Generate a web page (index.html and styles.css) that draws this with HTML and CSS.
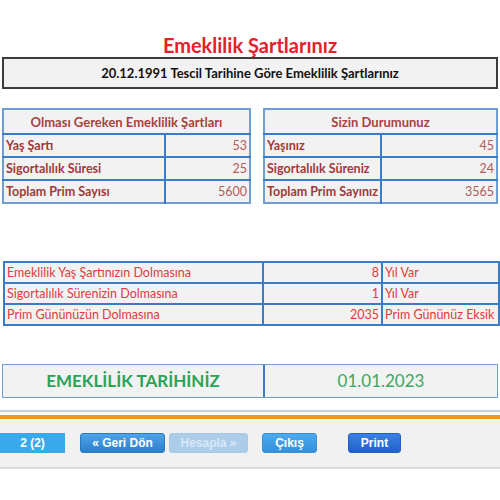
FILE: index.html
```html
<!DOCTYPE html>
<html lang="tr">
<head>
<meta charset="utf-8">
<link rel="stylesheet" href="styles.css">
</head>
<body>
<div class="page">
  <h1 class="title">Emeklilik Şartlarınız</h1>
  <div class="subtitle">20.12.1991 Tescil Tarihine Göre Emeklilik Şartlarınız</div>

  <div class="tables">
    <table class="info left">
      <tr><th colspan="2">Olması Gereken Emeklilik Şartları</th></tr>
      <tr><td class="lbl">Yaş Şartı</td><td class="val">53</td></tr>
      <tr><td class="lbl">Sigortalılık Süresi</td><td class="val">25</td></tr>
      <tr><td class="lbl">Toplam Prim Sayısı</td><td class="val">5600</td></tr>
    </table>
    <table class="info right">
      <tr><th colspan="2">Sizin Durumunuz</th></tr>
      <tr><td class="lbl">Yaşınız</td><td class="val">45</td></tr>
      <tr><td class="lbl">Sigortalılık Süreniz</td><td class="val">24</td></tr>
      <tr><td class="lbl">Toplam Prim Sayınız</td><td class="val">3565</td></tr>
    </table>
  </div>

  <table class="remain">
    <tr><td class="c1">Emeklilik Yaş Şartınızın Dolmasına</td><td class="c2">8</td><td class="c3">Yıl Var</td></tr>
    <tr><td class="c1">Sigortalılık Sürenizin Dolmasına</td><td class="c2">1</td><td class="c3">Yıl Var</td></tr>
    <tr><td class="c1">Prim Gününüzün Dolmasına</td><td class="c2">2035</td><td class="c3">Prim Gününüz Eksik</td></tr>
  </table>

  <div class="datebox">
    <div class="dlabel">EMEKLİLİK TARİHİNİZ</div>
    <div class="dvalue">01.01.2023</div>
  </div>

  <div class="sep-gray"></div>
  <div class="sep-orange"></div>
  <div class="toolbar">
    <span class="pager">2 (2)</span>
    <span class="btn back">« Geri Dön</span>
    <span class="btn disabled">Hesapla »</span>
    <span class="btn exit">Çıkış</span>
    <span class="btn print">Print</span>
  </div>
</div>
</body>
</html>
```

FILE: styles.css
```css
html, body {
  margin: 0;
  padding: 0;
  background: #ffffff;
}
.page {
  width: 500px;
  height: 500px;
  overflow: hidden;
  font-family: Lato, "Open Sans", sans-serif;
}
.title {
  margin: 0;
  padding-top: 33px;
  height: 24px;
  line-height: 24px;
  font-size: 20px;
  font-weight: bold;
  color: #e4202c;
  text-align: center;
}
.subtitle {
  margin: 0 2px 0 2px;
  height: 28px;
  line-height: 28px;
  border: 2px solid #3c3c3c;
  background: #f2f2f2;
  font-size: 13px;
  font-weight: bold;
  color: #111;
  text-align: center;
}
.tables {
  display: flex;
  justify-content: space-between;
  padding: 19px 2px 0 2px;
}
table {
  border-collapse: collapse;
}
.info {
  border: 2px solid #6f9fd0;
  background: #f2f2f2;
}
.info.left { width: 249px; }
.info.right { width: 235px; }
.info th {
  height: 23px;
  font-size: 13px;
  font-weight: bold;
  color: #a8413f;
  text-align: center;
  border-bottom: 2px solid #3a7cc6;
  padding: 0;
}
.info td {
  height: 21px;
  padding: 0 2px;
  font-size: 12.5px;
  border-top: 2px solid #3a7cc6;
}
.info td.lbl {
  font-weight: bold;
  color: #a0393a;
  border-right: 2px solid #3a7cc6;
}
.info.left td.lbl { width: 156px; }
.info.right td.lbl { width: 111px; }
.info td.val {
  text-align: right;
  color: #b25c5c;
}
.remain {
  margin: 57px 0 0 3px;
  width: 497px;
  table-layout: fixed;
  background: #f2f2f2;
  border: 2px solid #3a7cc6;
}
.remain td {
  height: 19px;
  padding: 0 2px;
  font-size: 12.5px;
  color: #e23a40;
  border: 2px solid #3a7cc6;
  white-space: nowrap;
  overflow: hidden;
}
.remain td.c1 { width: 253px; }
.remain td.c2 { width: 113px; text-align: right; }
.datebox {
  display: flex;
  margin: 38px 2px 0 2px;
  height: 32px;
  border: 1px solid #6f9fd0;
  background: #f2f2f2;
}
.dlabel {
  width: 260px;
  border-right: 2px solid #3a7cc6;
  line-height: 32px;
  text-align: center;
  font-size: 17px;
  font-weight: bold;
  color: #2aa356;
}
.dvalue {
  flex: 1;
  line-height: 32px;
  text-align: center;
  font-size: 17px;
  color: #3aa864;
}
.sep-gray {
  margin-top: 12px;
  height: 2px;
  background: #d0d0d0;
}
.sep-orange {
  margin-top: 3px;
  height: 4px;
  background: #f7941d;
}
.toolbar {
  display: flex;
  align-items: center;
  height: 48px;
  background: #f1f1f1;
  border-bottom: 2px solid #dcdcdc;
  font-family: "Liberation Sans", Arial, sans-serif;
  font-size: 12px;
  font-weight: bold;
  color: #ffffff;
}
.pager {
  width: 65px;
  height: 20px;
  line-height: 20px;
  text-align: center;
  background: #3aa9e9;
}
.btn {
  box-sizing: border-box;
  height: 20px;
  line-height: 18px;
  text-align: center;
  border-radius: 3px;
  border: 1px solid #2d78c2;
  background: linear-gradient(#4ea4e6, #2b7fcc);
}
.back { width: 85px; margin-left: 15px; }
.disabled {
  width: 79px;
  margin-left: 4px;
  border-color: #a9c9e6;
  background: #abcdea;
  color: #d9e8f6;
}
.exit {
  width: 55px;
  margin-left: 14px;
  border-color: #3490d8;
  background: linear-gradient(#4eaaee, #3490da);
}
.print {
  width: 53px;
  margin-left: 31px;
  border-color: #1f5fc4;
  background: linear-gradient(#3c80e2, #1f62cc);
}
```
